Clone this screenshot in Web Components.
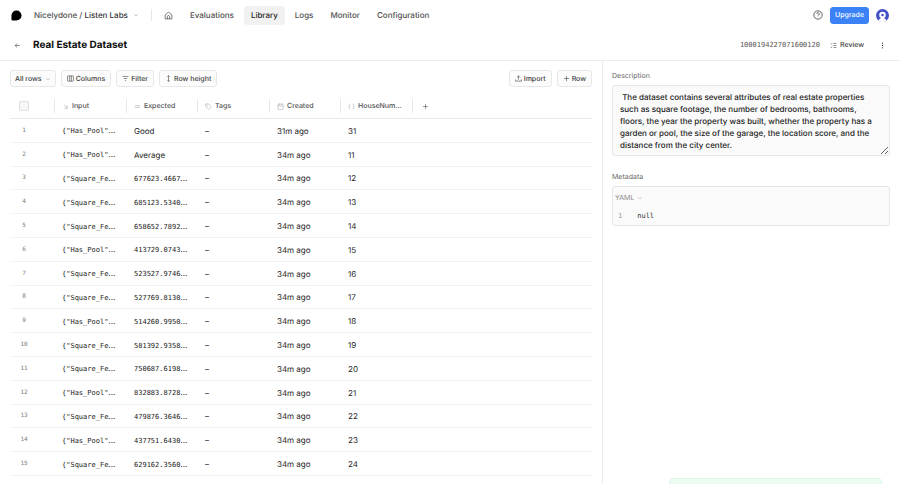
<!DOCTYPE html>
<html lang="en">
<head>
<meta charset="utf-8">
<title>Real Estate Dataset</title>
<style>
  html, body { margin: 0; height: 100%; }
  body {
    --line: #ececec;
    --ink: #1b1b1b;
    --mono: "DejaVu Sans Mono", monospace;
    font: 8px/12px Inter, sans-serif;
    color: var(--ink);
    background: #fff;
    text-rendering: geometricPrecision;
  }
</style>
</head>
<body>
<dataset-app></dataset-app>
<script>
const ICONS = {
  home: '<path d="M3 10.500 12 3l9 7.500V21H3z" stroke-linejoin="round"/><path d="M9 21v-6a3 3 0 0 1 6 0v6"/>',
  down: '<path d="m5 9 7 7 7-7"/>',
  back: '<path d="M20 12H4M11 5l-7 7 7 7"/>',
  columns: '<rect x="2" y="3" width="20" height="18" rx="2"/><path d="M9 3v18M15 3v18"/>',
  filter: '<path d="M2 5h20M6 12h12M10 19h4"/>',
  height: '<path d="M12 2v20M8 6l4-4 4 4M8 18l4 4 4-4"/>',
  upload: '<path d="M12 16V3M7 8l5-5 5 5M2 15v6h20v-6"/>',
  plus: '<path d="M12 3v18M3 12h18"/>',
  input: '<path d="m6 6 12 12M18 8v10H8"/>',
  equal: '<path d="M3 9h18M3 15h18"/>',
  tag: '<path d="M2 3h10l10 10-9 9L2 12z" stroke-linejoin="round"/><circle cx="7.500" cy="8" r="1"/>',
  calendar: '<rect x="3" y="4" width="18" height="18" rx="2"/><path d="M3 10h18M8 1v5M16 1v5"/>',
  braces: '<path d="M8 3C5 3 5 5 5 8c0 2-1 4-3 4 2 0 3 2 3 4 0 3 0 5 3 5M16 3c3 0 3 2 3 5 0 2 1 4 3 4-2 0-3 2-3 4 0 3 0 5-3 5"/>',
  review: '<path d="m2 6 2 2 4-4M2 17l2 2 4-4M12 5h10M12 12h10M12 19h10"/>',
  dots: '<g fill="currentColor" stroke="none"><circle cx="12" cy="4" r="2.300"/><circle cx="12" cy="12" r="2.300"/><circle cx="12" cy="20" r="2.300"/></g>',
  help: '<circle cx="12" cy="12" r="10"/><path d="M9 9.500a3 3 0 1 1 4.500 2.500c-1 .6-1.500 1-1.500 2M12 16.500v1"/>',
  logo: '<path fill="currentColor" stroke="none" d="M12 1a11 11 0 0 1 0 22H4a3 3 0 0 1-3-3v-8A11 11 0 0 1 12 1z"/>',
  avatar: '<circle cx="12" cy="12" r="12" fill="#4350c8" stroke="none"/><circle cx="12" cy="11" r="6" fill="#fff" stroke="none"/><path d="M5 21.800c1-4 4-5 7-5s6 1 7 5a12 12 0 0 1-14 0z" fill="#fff" stroke="none"/><circle cx="12" cy="11" r="2.300" fill="#4350c8" stroke="none"/>'
};

class BaseElement extends HTMLElement {
  connectedCallback() {
    if (this.shadowRoot) return;
    this.attachShadow({ mode: 'open' }).innerHTML =
      `<style>*{box-sizing:border-box}${this.css()}</style>${this.html()}`;
  }
  css() { return ''; }
  html() { return '<slot></slot>'; }
}

customElements.define('ui-icon', class extends BaseElement {
  css() {
    return `:host{display:inline-flex;flex:none;width:var(--icon,7px);height:var(--icon,7px)}
      svg{width:100%;height:100%;fill:none;stroke:currentColor;stroke-width:2;overflow:visible}`;
  }
  html() { return `<svg viewBox="0 0 24 24" aria-hidden="true">${ICONS[this.getAttribute('name')]}</svg>`; }
});

customElements.define('ui-button', class extends BaseElement {
  css() {
    return `:host{display:inline-flex}
      button{display:flex;align-items:center;gap:2px;height:17px;padding:0 5px;border:1px solid #e8e8e8;border-radius:3px;
        background:#fcfcfc;color:#3c3c3c;font:500 7px/12px Inter,sans-serif;white-space:nowrap;text-rendering:inherit}
      :host([plain]) button{border-color:transparent;background:none;gap:3px}
      :host([primary]) button{background:#3b82f6;border-color:#3b82f6;color:#fff;padding:0 4px}`;
  }
  html() {
    const label = this.getAttribute('label');
    const icon = this.getAttribute('icon');
    return `<button type="button"${label ? ` aria-label="${label}"` : ''}>${icon ? `<ui-icon name="${icon}"></ui-icon>` : ''}<slot></slot></button>`;
  }
});

customElements.define('ui-select', class extends BaseElement {
  css() {
    return `:host{display:inline-flex;align-items:center;height:17px;border:1px solid #e8e8e8;border-radius:3px;background:#fcfcfc;
        color:#3c3c3c;padding:0 4px;--icon:6px}
      :host([plain]){border:0;padding:0;background:none;color:#888;height:12px}
      select{appearance:none;border:0;background:none;padding:0 3px 0 0;margin:0;color:inherit;font:500 7px/12px Inter,sans-serif;
        field-sizing:content;text-rendering:inherit}
      :host([plain]) select{font-weight:400}
      ui-icon{color:#999}`;
  }
  html() {
    return `<select aria-label="${this.getAttribute('label')}"><option>${this.getAttribute('value')}</option></select><ui-icon name="down"></ui-icon>`;
  }
});

customElements.define('top-nav', class extends BaseElement {
  css() {
    return `:host{display:flex;align-items:center;height:30px;padding:0 11px;color:#505050;font-weight:500}
      .logo{color:#000;--icon:11px}
      .space{display:flex;align-items:center;gap:5px;border:0;background:none;padding:0;margin:0 12px;color:#505050;font:inherit;
        text-rendering:inherit;--icon:6px}
      .space b{font-weight:500;color:#333}
      .space ui-icon{color:#888}
      .rule{width:1px;height:12px;background:#e6e6e6}
      nav{display:flex;align-items:center;gap:3px;margin-left:5px}
      a{display:flex;align-items:center;height:19px;padding:0 7px;border-radius:4px;color:inherit;text-decoration:none;--icon:9px}
      a.on{background:#f1f1f1;color:#222}
      .end{display:flex;align-items:center;gap:7px;margin-left:auto;--icon:10px}
      .face{--icon:13px;border:0;padding:0;background:none;display:flex}
      .help{border:0;padding:0;background:none;display:flex;color:#444}`;
  }
  html() {
    return `<ui-icon class="logo" name="logo"></ui-icon>
      <button class="space" type="button"><span>Nicelydone / <b>Listen Labs</b></span><ui-icon name="down"></ui-icon></button>
      <span class="rule"></span>
      <nav><a href="#" aria-label="Home"><ui-icon name="home"></ui-icon></a>
      ${['Evaluations', 'Library', 'Logs', 'Monitor', 'Configuration'].map(t => `<a href="#"${t === 'Library' ? ' class="on"' : ''}>${t}</a>`).join('')}</nav>
      <div class="end"><button class="help" type="button" aria-label="Help"><ui-icon name="help"></ui-icon></button>
      <ui-button primary>Upgrade</ui-button>
      <button class="face" type="button" aria-label="Account"><ui-icon name="avatar"></ui-icon></button></div>`;
  }
});

customElements.define('page-header', class extends BaseElement {
  css() {
    return `:host{display:flex;align-items:center;height:31px;padding:0 8px;border-bottom:1px solid var(--line)}
      h1{margin:0 auto 0 6px;font-size:10px;line-height:16px;font-weight:700;color:#111}
      code{font:7px/12px var(--mono);color:#555;margin-right:1px}
      .end{display:flex;align-items:center;gap:3px}`;
  }
  html() {
    return `<ui-button plain icon="back" label="Back"></ui-button><h1><slot></slot></h1>
      <div class="end"><code>${this.getAttribute('code')}</code><ui-button plain icon="review">Review</ui-button>
      <ui-button plain icon="dots" label="More"></ui-button></div>`;
  }
});

customElements.define('table-toolbar', class extends BaseElement {
  css() {
    return `:host{display:flex;gap:5px;align-items:center;margin-bottom:7px}
      .end{display:flex;gap:5px;margin-left:auto}`;
  }
  html() {
    return `<ui-select label="Rows shown" value="All rows"></ui-select><ui-button icon="columns">Columns</ui-button>
      <ui-button icon="filter">Filter</ui-button><ui-button icon="height">Row height</ui-button>
      <div class="end"><ui-button icon="upload">Import</ui-button><ui-button icon="plus">Row</ui-button></div>`;
  }
});

const HAS = '{"Has_Pool"', SQ = '{"Square_Fe';
const ROWS = [
  [HAS, 'Good', 31], [HAS, 'Average', 11], [SQ, '677623.4667', 12], [SQ, '685123.5340', 13],
  [SQ, '658652.7892', 14], [HAS, '413729.0743', 15], [SQ, '523527.9746', 16], [SQ, '527769.8130', 17],
  [HAS, '514260.9950', 18], [SQ, '581392.9358', 19], [SQ, '750687.6198', 20], [HAS, '832883.8728', 21],
  [SQ, '479876.3646', 22], [HAS, '437751.6430', 23], [SQ, '629162.3560', 24]
];

customElements.define('dataset-table', class extends BaseElement {
  css() {
    return `:host{display:block}
      table{width:100%;height:382px;table-layout:fixed;border-collapse:separate;border-spacing:0}
      .c0{width:44px}.ca{width:72px}.cb{width:71px}
      th,td{padding:0 7px;text-align:left;white-space:nowrap;overflow:hidden;border-bottom:1px solid #f3f3f3}
      th{height:25px;font-size:7px;line-height:12px;font-weight:500;color:#505050;border-bottom-color:#e9e9e9}
      th>span{display:flex;align-items:center;gap:3px;height:14px}
      th ui-icon{color:#aaa}
      th+th{padding:0}
      th+th>span{border-left:1px solid #e8e8e8;padding-left:7px}
      th button{display:flex;border:0;background:none;padding:0 2px}
      th button ui-icon{color:#555}
      td{padding:1px 7px 0 8px;color:#222}
      td:first-child{font:6px/12px var(--mono);color:#777;text-align:center;padding:1px 16px 0 0}
      th:first-child{padding-left:9px}
      input{display:block;appearance:none;width:10px;height:10px;margin:0;border:1px solid #ddd;border-radius:2px;background:#f7f7f7}
      code{font:7px/12px var(--mono)}`;
  }
  html() {
    const head = [['input', 'Input'], ['equal', 'Expected'], ['tag', 'Tags'], ['calendar', 'Created'], ['braces', 'HouseNum...']]
      .map(([i, t]) => `<th scope="col"><span><ui-icon name="${i}"></ui-icon>${t}</span></th>`).join('');
    const rows = ROWS.map(([a, b, n], i) => `<tr><td>${i + 1}</td><td><code>${a}</code>...</td>
      <td>${i < 2 ? b : `<code>${b}</code>...`}</td><td>–</td><td>${i ? 34 : 31}m ago</td><td>${n}</td><td></td></tr>`).join('');
    return `<table><colgroup><col class="c0"><col class="ca"><col class="cb"><col class="ca"><col class="cb"><col class="ca"><col></colgroup>
      <thead><tr><th><input type="checkbox" aria-label="Select all rows"></th>${head}
      <th><span><button type="button" aria-label="Add column"><ui-icon name="plus"></ui-icon></button></span></th></tr></thead><tbody>${rows}</tbody></table>`;
  }
});

customElements.define('detail-panel', class extends BaseElement {
  css() {
    return `:host{display:block;padding:9px 10px 0 9px;border-left:1px solid var(--line);font-size:7px;color:#666}
      label,.label{display:block;margin-bottom:3px}
      textarea{display:block;width:100%;height:71px;margin:0 0 15px;padding:5px 16px 5px 7px;border:1px solid #e6e6e6;border-radius:3px;
        background:#fafafa;color:#222;font:500 8px/12px Inter,sans-serif;resize:vertical;outline:0;overflow:hidden;text-rendering:inherit}
      .editor{border:1px solid #e6e6e6;border-radius:3px;background:#fafafa;padding:5px 2px 3px}
      .line{display:flex;gap:15px;padding:6px 3px 0;font:7px/12px var(--mono);color:#999}
      .line code{font:inherit;color:#333}`;
  }
  html() {
    return `<label for="d">Description</label><textarea id="d" spellcheck="false"> The dataset contains several attributes of real estate properties such as square footage, the number of bedrooms, bathrooms, floors, the year the property was built, whether the property has a garden or pool, the size of the garage, the location score, and the distance from the city center.</textarea>
      <div class="label">Metadata</div><div class="editor"><ui-select plain label="Format" value="YAML"></ui-select>
      <div class="line"><span>1</span><code>null</code></div></div>`;
  }
});

customElements.define('status-toast', class extends BaseElement {
  css() {
    return `:host{display:block;position:fixed;right:18px;bottom:-26px;width:213px;height:32px;box-sizing:border-box;
      border:1px solid #dcf8e4;border-radius:4px;background:#eafdf0}`;
  }
});

customElements.define('dataset-app', class extends BaseElement {
  css() {
    return `:host{display:flex;flex-direction:column;height:100vh;overflow:hidden}
      top-nav,page-header{flex:none}
      .body{flex:1;min-height:0;display:grid;grid-template-columns:minmax(0,1fr) 298px}
      main{padding:9px 10px 0;overflow:hidden}`;
  }
  html() {
    return `<top-nav></top-nav><page-header code="1000194227071600120">Real Estate Dataset</page-header>
      <div class="body"><main><table-toolbar></table-toolbar><dataset-table></dataset-table></main><detail-panel></detail-panel></div>
      <status-toast role="status"></status-toast>`;
  }
});
</script>
</body>
</html>
